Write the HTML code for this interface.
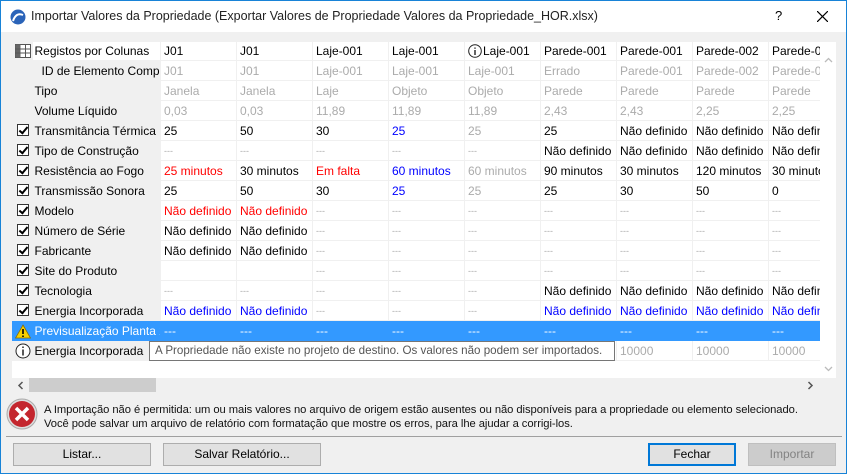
<!DOCTYPE html>
<html><head><meta charset="utf-8"><style>
*{box-sizing:border-box;margin:0;padding:0}
body{width:847px;height:474px;overflow:hidden;font-family:"Liberation Sans",sans-serif;font-size:12px;color:#000;background:#f0f0f0;position:relative}
.win{position:absolute;left:0;top:0;width:847px;height:474px;border:1px solid #1883d7;background:#f0f0f0}
.title{position:absolute;left:0;top:0;width:845px;height:31px;background:#fff}
.title .t{position:absolute;left:30px;top:8px;font-size:12.5px;color:#222}
.grid{position:absolute;left:11px;top:41px;width:808px;height:336px;background:#fff;overflow:hidden}
table{border-collapse:collapse;table-layout:fixed;width:832px;margin-top:-2px}
td{height:20px;border:1px solid #f0f0f0;white-space:nowrap;overflow:hidden;padding:0 0 0 3px;line-height:18px}
td.ic{width:20px;background:#f0f0f0;border-right:none;padding:0;text-align:center}
td.lb{width:128px;background:#f0f0f0;border-left:none;padding-left:2px}
td.d{width:76px}
.g{color:#ababab}.r{color:#f00}.b{color:#00f}
.sm{font-size:9px;letter-spacing:0}
tr.sel td{background:#3399ff;color:#fff;border-color:#3399ff}
tr.sel td.d{border-left:1px solid #fff}
.cb{display:inline-block;width:12px;height:12px;border:1px solid #333;background:#fff;vertical-align:middle;position:relative;top:-1px}
.cb:after{content:"";position:absolute;left:3px;top:0px;width:3px;height:7px;border:solid #000;border-width:0 2px 2px 0;transform:rotate(40deg)}
.tip{position:absolute;left:148px;top:340px;width:466px;height:20px;background:#fff;border:1px solid #767676;color:#555;font-size:11.6px;line-height:18px;padding-left:5px;white-space:nowrap;overflow:hidden}
.btn{position:absolute;top:442px;height:23px;background:#e1e1e1;border:1px solid #adadad;text-align:center;line-height:21px}
</style></head><body><div class="win">
<div class="title">
<svg style="position:absolute;left:9px;top:8px" width="16" height="16" viewBox="0 0 16 16"><circle cx="8" cy="8" r="7.5" fill="#2a63b8"/><path d="M3 12 Q6 3 13 6" stroke="#fff" stroke-width="2" fill="none"/></svg>
<span class="t">Importar Valores da Propriedade (Exportar Valores de Propriedade Valores da Propriedade_HOR.xlsx)</span>
<span style="position:absolute;left:774px;top:7px;font-size:13px">?</span>
<svg style="position:absolute;left:816px;top:10px" width="11" height="11"><path d="M0 0L11 11M11 0L0 11" stroke="#000" stroke-width="1.2"/></svg>
</div>
<div class="grid"><table>
<tr><td class="ic"><svg width="16" height="14" style="vertical-align:middle"><rect x="0.5" y="0.5" width="15" height="13" fill="#fff" stroke="#555"/><rect x="0.5" y="0.5" width="5" height="13" fill="#666"/><path d="M0 5H16M0 9H16M10.5 0V14" stroke="#555"/></svg></td><td class="lb" style="background:#fff">Registos por Colunas</td><td class="d">J01</td><td class="d">J01</td><td class="d">Laje-001</td><td class="d">Laje-001</td><td class="d"><svg width="14" height="14" style="vertical-align:middle;margin-right:1px"><circle cx="7" cy="7" r="6.3" fill="none" stroke="#222"/><path d="M7 6V11M7 3.5V4.8" stroke="#222" stroke-width="1.4"/></svg>Laje-001</td><td class="d">Parede-001</td><td class="d">Parede-001</td><td class="d">Parede-002</td><td class="d">Parede-003</td></tr>
<tr><td class="ic"></td><td class="lb" style="padding-left:9px">ID de Elemento Compacto</td><td class="d g">J01</td><td class="d g">J01</td><td class="d g">Laje-001</td><td class="d g">Laje-001</td><td class="d g">Laje-001</td><td class="d g">Errado</td><td class="d g">Parede-001</td><td class="d g">Parede-002</td><td class="d g">Parede-003</td></tr>
<tr><td class="ic"></td><td class="lb">Tipo</td><td class="d g">Janela</td><td class="d g">Janela</td><td class="d g">Laje</td><td class="d g">Objeto</td><td class="d g">Objeto</td><td class="d g">Parede</td><td class="d g">Parede</td><td class="d g">Parede</td><td class="d g">Parede</td></tr>
<tr><td class="ic"></td><td class="lb">Volume Líquido</td><td class="d g">0,03</td><td class="d g">0,03</td><td class="d g">11,89</td><td class="d g">11,89</td><td class="d g">11,89</td><td class="d g">2,43</td><td class="d g">2,43</td><td class="d g">2,25</td><td class="d g">2,25</td></tr>
<tr><td class="ic"><span class="cb"></span></td><td class="lb">Transmitância Térmica</td><td class="d">25</td><td class="d">50</td><td class="d">30</td><td class="d b">25</td><td class="d g">25</td><td class="d">25</td><td class="d">Não definido</td><td class="d">Não definido</td><td class="d">Não definido</td></tr>
<tr><td class="ic"><span class="cb"></span></td><td class="lb">Tipo de Construção</td><td class="d g sm">---</td><td class="d g sm">---</td><td class="d g sm">---</td><td class="d g sm">---</td><td class="d g sm">---</td><td class="d">Não definido</td><td class="d">Não definido</td><td class="d">Não definido</td><td class="d">Não definido</td></tr>
<tr><td class="ic"><span class="cb"></span></td><td class="lb">Resistência ao Fogo</td><td class="d r">25 minutos</td><td class="d">30 minutos</td><td class="d r">Em falta</td><td class="d b">60 minutos</td><td class="d g">60 minutos</td><td class="d">90 minutos</td><td class="d">30 minutos</td><td class="d">120 minutos</td><td class="d">30 minutos</td></tr>
<tr><td class="ic"><span class="cb"></span></td><td class="lb">Transmissão Sonora</td><td class="d">25</td><td class="d">50</td><td class="d">30</td><td class="d b">25</td><td class="d g">25</td><td class="d">25</td><td class="d">30</td><td class="d">50</td><td class="d">0</td></tr>
<tr><td class="ic"><span class="cb"></span></td><td class="lb">Modelo</td><td class="d r">Não definido</td><td class="d r">Não definido</td><td class="d g sm">---</td><td class="d g sm">---</td><td class="d g sm">---</td><td class="d g sm">---</td><td class="d g sm">---</td><td class="d g sm">---</td><td class="d g sm">---</td></tr>
<tr><td class="ic"><span class="cb"></span></td><td class="lb">Número de Série</td><td class="d">Não definido</td><td class="d">Não definido</td><td class="d g sm">---</td><td class="d g sm">---</td><td class="d g sm">---</td><td class="d g sm">---</td><td class="d g sm">---</td><td class="d g sm">---</td><td class="d g sm">---</td></tr>
<tr><td class="ic"><span class="cb"></span></td><td class="lb">Fabricante</td><td class="d">Não definido</td><td class="d">Não definido</td><td class="d g sm">---</td><td class="d g sm">---</td><td class="d g sm">---</td><td class="d g sm">---</td><td class="d g sm">---</td><td class="d g sm">---</td><td class="d g sm">---</td></tr>
<tr><td class="ic"><span class="cb"></span></td><td class="lb">Site do Produto</td><td class="d"></td><td class="d"></td><td class="d g sm">---</td><td class="d g sm">---</td><td class="d g sm">---</td><td class="d g sm">---</td><td class="d g sm">---</td><td class="d g sm">---</td><td class="d g sm">---</td></tr>
<tr><td class="ic"><span class="cb"></span></td><td class="lb">Tecnologia</td><td class="d g sm">---</td><td class="d g sm">---</td><td class="d g sm">---</td><td class="d g sm">---</td><td class="d g sm">---</td><td class="d">Não definido</td><td class="d">Não definido</td><td class="d">Não definido</td><td class="d">Não definido</td></tr>
<tr><td class="ic"><span class="cb"></span></td><td class="lb">Energia Incorporada</td><td class="d b">Não definido</td><td class="d b">Não definido</td><td class="d g sm">---</td><td class="d g sm">---</td><td class="d g sm">---</td><td class="d b">Não definido</td><td class="d b">Não definido</td><td class="d b">Não definido</td><td class="d b">Não definido</td></tr>
<tr class="sel"><td class="ic"><svg width="16" height="15" style="vertical-align:middle"><path d="M8 1L15.5 14H0.5Z" fill="#f7d000" stroke="#8a6d00" stroke-width="0.8"/><path d="M8 5V10M8 11.5V13" stroke="#000" stroke-width="1.6"/></svg></td><td class="lb">Previsualização Planta 2D</td><td class="d">---</td><td class="d">---</td><td class="d">---</td><td class="d">---</td><td class="d">---</td><td class="d">---</td><td class="d">---</td><td class="d">---</td><td class="d">---</td></tr>
<tr><td class="ic"><svg width="16" height="16" style="vertical-align:middle"><circle cx="8" cy="8" r="7" fill="#fff" stroke="#222"/><path d="M8 6.5V12.5M8 3.5V5" stroke="#222" stroke-width="1.5"/></svg></td><td class="lb">Energia Incorporada</td><td class="d g">10000</td><td class="d g">10000</td><td class="d g">10000</td><td class="d g">10000</td><td class="d g">10000</td><td class="d g">10000</td><td class="d g">10000</td><td class="d g">10000</td><td class="d g">10000</td></tr>
</table></div>
<div class="tip">A Propriedade não existe no projeto de destino. Os valores não podem ser importados.</div>
<div style="position:absolute;left:819px;top:41px;width:16px;height:336px;background:#fff"></div>
<svg style="position:absolute;left:823px;top:56px" width="9" height="6"><path d="M1 5L4.5 1.5L8 5" stroke="#bbb" fill="none" stroke-width="1.3"/></svg>
<svg style="position:absolute;left:823px;top:365px" width="9" height="6"><path d="M1 1L4.5 4.5L8 1" stroke="#bbb" fill="none" stroke-width="1.3"/></svg>
<div style="position:absolute;left:11px;top:377px;width:808px;height:14px;background:#f0f0f0"></div>
<div style="position:absolute;left:28px;top:377px;width:127px;height:14px;background:#cdcdcd"></div>
<svg style="position:absolute;left:16px;top:380px" width="7" height="9"><path d="M5.5 1L2 4.5L5.5 8" stroke="#555" fill="none" stroke-width="1.5"/></svg>
<svg style="position:absolute;left:806px;top:380px" width="7" height="9"><path d="M1.5 1L5 4.5L1.5 8" stroke="#555" fill="none" stroke-width="1.5"/></svg>
<svg style="position:absolute;left:5px;top:397px" width="32" height="32"><circle cx="16" cy="16" r="15" fill="#ddd" stroke="#aaa"/><circle cx="16" cy="16" r="13" fill="#c4262e"/><path d="M10 10L22 22M22 10L10 22" stroke="#fff" stroke-width="3.5"/></svg>
<div style="position:absolute;left:43px;top:402px;line-height:14px;color:#111;font-size:11.2px;white-space:nowrap;letter-spacing:-0.05px">A Importação não é permitida: um ou mais valores no arquivo de origem estão ausentes ou não disponíveis para a propriedade ou elemento selecionado.<br>Você pode salvar um arquivo de relatório com formatação que mostre os erros, para lhe ajudar a corrigi-los.</div>
<div style="position:absolute;left:5px;top:435px;width:836px;height:1px;background:#a0a0a0"></div>
<div class="btn" style="left:12px;width:138px">Listar...</div>
<div class="btn" style="left:162px;width:158px">Salvar Relatório...</div>
<div class="btn" style="left:647px;width:88px;border:2px solid #0078d7;line-height:19px">Fechar</div>
<div class="btn" style="left:747px;width:88px;background:#ccc;border-color:#bfbfbf;color:#838383">Importar</div>
</div></body></html>
